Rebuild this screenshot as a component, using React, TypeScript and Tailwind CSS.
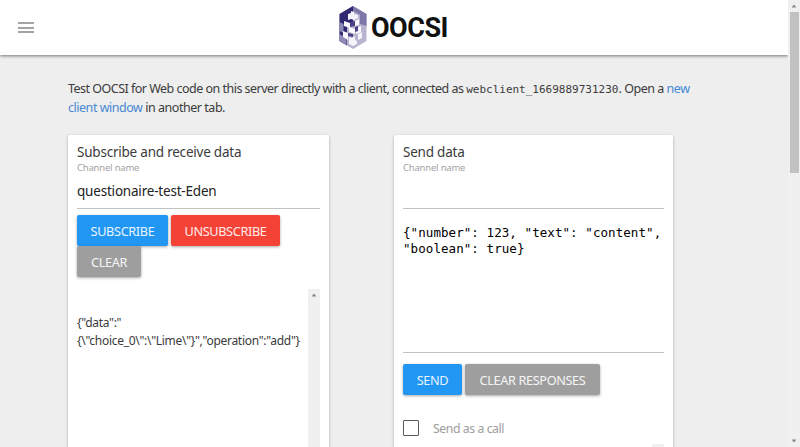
import type { ReactNode } from "react";

const tone = {
  blue: "bg-[#2196f3]",
  red: "bg-[#f44336]",
  gray: "bg-[#9e9e9e]",
};

function Button({ color, width, children }: { color: keyof typeof tone; width: string; children: ReactNode }) {
  return (
    <button
      className={`${tone[color]} ${width} h-[31px] shrink-0 rounded-[2px] text-center text-[12.700px] leading-[32px] tracking-[-0.35px] whitespace-nowrap text-white/90 shadow-[0_1px_3px_rgba(0,0,0,0.35)]`}
    >
      {children}
    </button>
  );
}

function Arrow({ down = false }: { down?: boolean }) {
  return (
    <svg className={`h-3 w-3 shrink-0 ${down ? "rotate-180" : ""}`} viewBox="0 0 12 12">
      <path d="M6 4.5 8.5 7.5h-5z" fill="#8b8b8b" />
    </svg>
  );
}

function Logo() {
  return (
    <svg className="h-[43px] w-[28px] shrink-0" viewBox="0 0 28 43">
      <path d="M14 0 27.500 8v27L14 43 .5 35V8z" fill="#b7b4d0" />
      <path d="M14 0 .5 8v27L8 39.500V20l6-4z" fill="#2f2870" />
      <path d="M14 0v5l7 4v9l6.500 2V8z" fill="#7d78a8" />
      <path d="M.5 16l4 2v9l-4-2zM.5 28l7 4v7L.5 35z" fill="#8f8bb7" />
      <path d="M9 8l3-1V5l3 1v2l4 1v3l-4 2-3-1-3 1z" fill="#f5f4fb" />
      <path d="M5 15l6 2v5l-6-2zM16 15l4-2v6l-4 1zM10 21l6 2v5l-6-2zM4 25l5 2v7l-5-3zM17 22l5-2v6l-5 2z" fill="#fbfaff" />
      <path d="M19 28l4-2v6l-4 2zM10 31l3 1 3-2v4l2 1v3l-4 2-4-2v-3z" fill="#f5f4fb" />
      <path d="M11 16l5-1v5l-5 1zM16 21l3-1v5l-3 1zM9 27l5 1v3l-5-1z" fill="#4a4284" />
    </svg>
  );
}

function ChannelField({ value }: { value: string }) {
  return (
    <label className="block h-[48px] border-b border-[#c2c2c2]">
      <span className="block h-[13px] text-[9.500px] leading-[13px] tracking-[-0.2px] text-[#a3a3a3]">Channel name</span>
      <span className="block h-[34px] text-[13.500px] leading-[34px] tracking-[-0.2px] text-[#222]">{value}</span>
    </label>
  );
}

export default function App() {
  return (
    <div className="flex h-[447px] w-[800px] overflow-hidden bg-[#eee] font-['Noto_Sans','Open_Sans',sans-serif] text-[13px] text-[#3b3b3b]">
      <div className="flex w-[788px] flex-col">
        <header className="grid h-[55px] shrink-0 grid-cols-[339px_1fr] items-center bg-white shadow-[0_1px_3px_rgba(0,0,0,0.5)]">
          <div className="ml-[18px] flex w-4 flex-col gap-[2.500px]">
            <i className="h-[2px] bg-[#a3a3a3]" />
            <i className="h-[2px] bg-[#a3a3a3]" />
            <i className="h-[2px] bg-[#a3a3a3]" />
          </div>
          <div className="flex items-center">
            <Logo />
            <span className="ml-1 pt-px font-['Roboto',sans-serif] text-[27px] leading-none font-bold tracking-[-0.500px] text-[#111]">
              OOCSI
            </span>
          </div>
        </header>
        <main className="px-[68px] pt-[25px]">
          <p className="h-[37px] text-[12.500px] leading-[18.500px] whitespace-nowrap">
            <span className="tracking-[-0.515px]">Test OOCSI for Web code on this server directly with a client, connected as </span>
            <code className="font-['DejaVu_Sans_Mono',monospace] text-[11px] leading-none">webclient_1669889731230</code>
            <span className="tracking-[-0.470px]">
              . Open a <a className="text-[#4787d3]">new</a>
            </span>
            <br />
            <span className="tracking-[-0.470px]">
              <a className="text-[#4787d3]">client window</a> in another tab.
            </span>
          </p>
          <div className="mt-[18px] flex gap-[65px]">
            <section className="h-[330px] w-[261px] rounded-[2px] bg-white px-[9px] pt-[8px] shadow-[0_1px_3px_rgba(0,0,0,0.3)]">
              <h2 className="h-[18px] text-[13.500px] leading-[18px] tracking-[-0.220px]">Subscribe and receive data</h2>
              <ChannelField value="questionaire-test-Eden" />
              <div className="mt-[6px] flex flex-wrap gap-x-[3px]">
                <Button color="blue" width="w-[91px]">SUBSCRIBE</Button>
                <Button color="red" width="w-[109px]">UNSUBSCRIBE</Button>
                <Button color="gray" width="w-[64px]">CLEAR</Button>
              </div>
              <div className="mt-[12px] flex h-[180px] justify-between">
                <div className="pt-[25px] text-[12px] leading-[18px] tracking-[-0.290px] whitespace-nowrap">
                  {'{"data":"'}
                  <br />
                  {'{\\"choice_0\\":\\"Lime\\"}","operation":"add"}'}
                </div>
                <div className="w-3 shrink-0 bg-[#f0f0f0]"><Arrow /></div>
              </div>
            </section>
            <section className="h-[330px] w-[279px] rounded-[2px] bg-white px-[9px] pt-[8px] shadow-[0_1px_3px_rgba(0,0,0,0.3)]">
              <h2 className="h-[18px] text-[13.500px] leading-[18px] tracking-[-0.220px]">Send data</h2>
              <ChannelField value="" />
              <div className="h-[144px] border-b border-[#c2c2c2] pt-[16px] font-['DejaVu_Sans_Mono',monospace] text-[12.500px] leading-[16px] tracking-[0.07px] whitespace-pre text-black">
                {'{"number": 123, "text": "content",\n"boolean": true}'}
              </div>
              <div className="mt-[11px] flex gap-[3px]">
                <Button color="blue" width="w-[59px]">SEND</Button>
                <Button color="gray" width="w-[135px]">CLEAR RESPONSES</Button>
              </div>
              <label className="mt-[25px] flex h-4 items-center gap-[14px] text-[12.300px] text-[#9e9e9e]">
                <i className="h-4 w-4 rounded-[1px] border-[1.500px] border-[#5a5a5a]" />
                <span className="pt-[2px] tracking-[-0.450px]">Send as a call</span>
              </label>
              <div className="mt-[8px] ml-auto h-5 w-3 bg-[#f0f0f0]" />
            </section>
          </div>
        </main>
      </div>
      <aside className="flex w-3 flex-col items-center bg-[#f0f0f0]">
        <Arrow />
        <div className="h-[161px] w-[9px] bg-[#c1c1c1]" />
        <div className="flex-1" />
        <Arrow down />
      </aside>
    </div>
  );
}
